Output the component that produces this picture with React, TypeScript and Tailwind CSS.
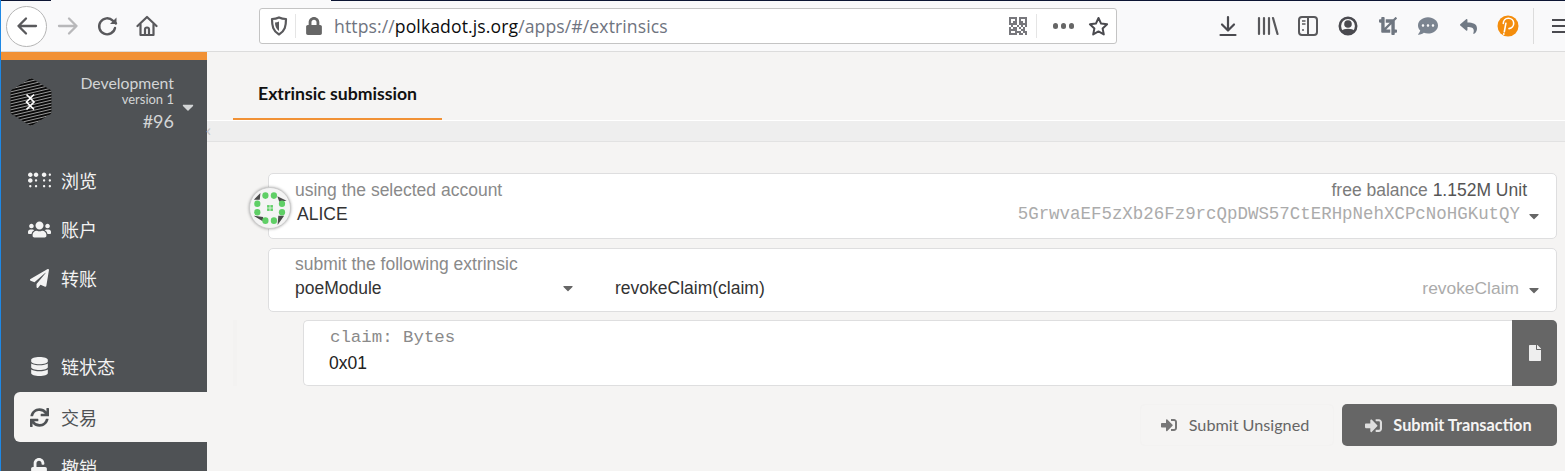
import React from "react";
import { FaBraille, FaUsers, FaPaperPlane, FaDatabase, FaSync, FaUnlock, FaFile, FaSignInAlt, FaCaretDown, FaLock, FaCommentDots, FaReply, FaCrop } from "react-icons/fa";

const sans = "font-['Liberation_Sans',Arial,sans-serif]";
const cjk = "font-['Noto_Sans_CJK_SC','Noto_Sans',sans-serif]";
const lato = "font-['Lato',sans-serif]";
const mono = "font-['Liberation_Mono',monospace]";

function Back() {
  return (
    <svg width="24" height="24" viewBox="0 0 24 24" fill="none" stroke="#59595c" strokeWidth="2.3" strokeLinecap="round" strokeLinejoin="round">
      <path d="M21 12H3.500M11 4.500 3.500 12l7.500 7.500" />
    </svg>
  );
}
function Forward() {
  return (
    <svg width="24" height="24" viewBox="0 0 24 24" fill="none" stroke="#b8b8ba" strokeWidth="2.3" strokeLinecap="round" strokeLinejoin="round">
      <path d="M3 12h17.500M13 4.500l7.500 7.500-7.500 7.500" />
    </svg>
  );
}
function Reload() {
  return (
    <svg width="22" height="22" viewBox="0 0 22 22" fill="none" stroke="#59595c" strokeWidth="2.4" strokeLinecap="round" strokeLinejoin="round">
      <path d="M18 13a8 8 0 1 1-2.200-7.400L19 8.500" />
      <path d="M19.500 2.500v6.500H13" fill="#59595c" stroke="none" />
    </svg>
  );
}
function Home() {
  return (
    <svg width="22" height="22" viewBox="0 0 22 22" fill="none" stroke="#59595c" strokeWidth="2.200" strokeLinejoin="round" strokeLinecap="round">
      <path d="M1.500 11 11 2l9.500 9" />
      <path d="M4.500 9.500V20h13V9.500" />
      <path d="M9 20v-5.500a2 2 0 0 1 4 0V20" />
    </svg>
  );
}
function Shield() {
  return (
    <svg width="18" height="20" viewBox="0 0 18 20" fill="none">
      <path d="M2 3c3 0 5-.6 7-1.600C11 2.400 13 3 16 3c0 7-1 12-7 15.500C3 15 2 10 2 3Z" stroke="#59595c" strokeWidth="2.200" strokeLinejoin="round" />
      <path d="M9 5.500v9.500c-3-2-4-5-4-8.500 1.500 0 2.800-.3 4-1Z" fill="#59595c" />
    </svg>
  );
}
function Qr() {
  const on = [
    "111101111","100101001","101101101","111101111","010010101","101101010","111100110","100111011","111101101",
  ];
  return (
    <svg width="18" height="18" viewBox="0 0 9 9" shapeRendering="crispEdges">
      {on.flatMap((row, y) =>
        row.split("").map((c, x) => (c === "1" ? <rect key={`${x}-${y}`} x={x} y={y} width="1" height="1" fill="#77777c" /> : null))
      )}
    </svg>
  );
}
function Library() {
  return (
    <svg width="22" height="20" viewBox="0 0 22 20" fill="none" stroke="#59595c" strokeWidth="2.200" strokeLinecap="round">
      <path d="M2 2v16M7 2v16M12 2v16M16 2l4.500 16" />
    </svg>
  );
}
function SidePanel() {
  return (
    <svg width="20" height="20" viewBox="0 0 20 20" fill="none">
      <rect x="1" y="1" width="18" height="18" rx="3" stroke="#59595c" strokeWidth="2" />
      <path d="M10 1v18" stroke="#59595c" strokeWidth="2" />
      <path d="M4 5h3.500M4 8h3.500M4 14h2" stroke="#59595c" strokeWidth="1.500" />
    </svg>
  );
}
function Account() {
  return (
    <svg width="20" height="20" viewBox="0 0 20 20">
      <circle cx="10" cy="10" r="8.200" fill="none" stroke="#4a4a4f" strokeWidth="2.600" />
      <circle cx="10" cy="8" r="3.800" fill="#4a4a4f" />
      <path d="M3.500 15c2-3 11-3 13 0-2 3-11 3-13 0Z" fill="#4a4a4f" />
    </svg>
  );
}
function Polka() {
  return (
    <svg width="22" height="22" viewBox="0 0 22 22">
      <circle cx="11" cy="11" r="10.500" fill="#f48d0c" />
      <path d="M6.300 8.500a5.200 5.200 0 1 1 5.700 5.100" fill="none" stroke="#fff" strokeWidth="1.600" strokeLinecap="round" />
      <path d="M8.900 8.200 7.300 16.800" fill="none" stroke="#fff" strokeWidth="1.600" strokeLinecap="round" />
      <circle cx="6.800" cy="19" r="0.900" fill="#fff" />
    </svg>
  );
}
function Logo() {
  const lines: number[] = [];
  for (let i = 0; i < 19; i++) lines.push(i * 3);
  return (
    <svg width="42" height="48" viewBox="0 0 42 48">
      <defs>
        <clipPath id="hex">
          <path d="M21 0 39 11c2 1 2.500 2 2.500 4v18c0 2-.5 3-2.500 4L21 48 3 37c-2-1-2.500-2-2.500-4V15c0-2 .5-3 2.500-4Z" />
        </clipPath>
      </defs>
      <g clipPath="url(#hex)">
        <rect width="42" height="48" fill="#0b0b0b" />
        {lines.map((y) => (
          <path key={y} d={`M0 ${y + 5}L42 ${y - 5}`} stroke="#bdbdbd" strokeWidth="0.800" />
        ))}
        <path d="M16.500 16.500 24 24 16.500 31.500M24 16.500 16.500 24 24 31.500" fill="none" stroke="#fff" strokeWidth="1.700" />
      </g>
    </svg>
  );
}
function Identicon() {
  const dots: [number, number][] = [
    [15.800, 7.800], [24.500, 7.800], [7.500, 16.200], [32.800, 16.200], [7.500, 24.800], [32.800, 24.800], [15.800, 33.500], [24.500, 33.500],
  ];
  return (
    <svg width="42" height="42" viewBox="0 0 41 41" className="absolute left-[-20px] top-[13px] rounded-full bg-[#f4f4f4] shadow-[0_0_3px_rgba(0,0,0,0.35)] border border-[#ccc]">
      <path d="M10.700 5 4 12 10 12ZM28 8.500 37.500 13 30 14.200ZM3.800 28.500 13.500 29.800 13 34.200ZM28.300 38 35 28.500 29 28.500Z" fill="#4a4a4a" />
      {dots.map(([x, y]) => (
        <ellipse key={`${x}-${y}`} cx={x} cy={y} rx="3.200" ry="3.400" fill="#5fcf66" />
      ))}
      <rect x="17.500" y="17.500" width="6" height="6" fill="#5fcf66" />
      <path d="M20.500 17.500v6M17.500 20.500h6" stroke="#f4f4f4" strokeWidth="0.800" />
    </svg>
  );
}

function NavItem({ icon, label, active, mt }: { icon: React.ReactNode; label: string; active?: boolean; mt?: string }) {
  return (
    <div
      className={`ml-[13px] h-[50px] flex items-center shrink-0 ${mt ?? ""} ${
        active ? "bg-[#f5f4f3] rounded-l-[6px] text-[#4f5255]" : "text-[#f3f3f3]"
      }`}
    >
      <span className="w-[24px] ml-[13px] flex justify-center">{icon}</span>
      <span className={`ml-[10px] text-[18px] ${cjk}`}>{label}</span>
    </div>
  );
}

export default function App() {
  return (
    <div className="w-[1565px] h-[471px] overflow-hidden flex flex-col border-l border-[#1e88e5] bg-[#f5f4f3]">
      <div className="h-px flex shrink-0 bg-[#f9f9fa]">
        <div className="w-[50px] bg-[#0c1533]" />
        <div className="w-[280px]" />
        <div className="flex-1 bg-[#0c1533]" />
      </div>
      {/* browser toolbar */}
      <header className="h-[51px] shrink-0 flex items-center bg-[#f9f9fa] border-b border-[#dcdcdc] overflow-hidden">
        <div className="ml-[5px] w-[41px] h-[41px] shrink-0 rounded-full border border-[#b5b5b5] bg-white flex items-center justify-center">
          <Back />
        </div>
        <div className="ml-[9px] w-[24px] shrink-0 flex justify-center"><Forward /></div>
        <div className="ml-[15px] w-[26px] shrink-0 flex justify-center"><Reload /></div>
        <div className="ml-[13px] w-[26px] shrink-0 flex justify-center"><Home /></div>
        <div className="ml-[99px] w-[858px] shrink-0 h-[36px] bg-white rounded-[3px] border border-[#c4c4c4] flex items-center">
          <div className="ml-[10px]"><Shield /></div>
          <div className="ml-[7px] w-px h-[24px] bg-[#e5e5e5]" />
          <FaLock className="ml-[9px] text-[#666]" size={18} />
          <div className="ml-[11px] text-[17.600px] font-['Open_Sans',sans-serif] text-[#6f7480] tracking-[0.1px] whitespace-nowrap">
            https://<span className="text-[#0c0c0d]">polkadot.js.org</span>/apps/#/extrinsics
          </div>
          <div className="ml-auto mr-[9px]"><Qr /></div>
          <div className="w-px h-[24px] bg-[#e5e5e5] mr-[16px]" />
          <div className="flex gap-[2.500px] mr-[14px]">
            <span className="w-[5.500px] h-[5.500px] rounded-full bg-[#666]" />
            <span className="w-[5.500px] h-[5.500px] rounded-full bg-[#666]" />
            <span className="w-[5.500px] h-[5.500px] rounded-full bg-[#666]" />
          </div>
          <svg width="21" height="20" viewBox="0 0 21 20" className="mr-[7px]" fill="none" stroke="#4a4a4f" strokeWidth="2" strokeLinejoin="round">
            <path d="m10.500 2 2.600 5.600 6 .7-4.500 4.100 1.200 6-5.300-3-5.300 3 1.200-6L1.900 8.300l6-.7Z" />
          </svg>
        </div>
        <div className="ml-[91px] flex items-center shrink-0">
          <div className="w-10 flex justify-center">
            <svg width="18" height="22" viewBox="0 0 18 22" fill="none" stroke="#4a4a4f" strokeWidth="2.200" strokeLinecap="round" strokeLinejoin="round">
              <path d="M9 2v13M3 9.500 9 15.500l6-6M1.500 20h15" />
            </svg>
          </div>
          <div className="w-10 flex justify-center"><Library /></div>
          <div className="w-10 flex justify-center"><SidePanel /></div>
          <div className="w-10 flex justify-center"><Account /></div>
          <div className="w-10 flex justify-center"><FaCrop size={18} className="text-[#6f7680]" /></div>
          <div className="w-10 flex justify-center"><FaCommentDots size={20} className="text-[#7b8490]" /></div>
          <div className="w-10 flex justify-center"><FaReply size={17} className="text-[#717a85]" /></div>
          <div className="w-10 flex justify-center"><Polka /></div>
        </div>
        <div className="ml-[5px] w-px h-[36px] shrink-0 bg-[#dcdcdc]" />
        <div className="ml-[18px] w-[24px] flex flex-col gap-[4px] shrink-0">
          <span className="h-[2px] bg-[#4a4a4f]" />
          <span className="h-[2px] bg-[#4a4a4f]" />
          <span className="h-[2px] bg-[#4a4a4f]" />
        </div>
      </header>

      <div className="flex-1 min-h-0 flex">
        {/* sidebar */}
        <aside className="w-[206px] shrink-0 bg-[#4f5255] border-t-[8px] border-[#f19135] flex flex-col overflow-hidden">
          <div className="h-[95px] shrink-0 flex relative">
            <div className="ml-[9px] mt-[18px] shrink-0"><Logo /></div>
            <div className={`ml-auto mr-[33px] mt-[14px] text-right text-[#d3d5d6] ${lato}`}>
              <div className="text-[15.800px] leading-[18px]">Development</div>
              <div className="text-[13px] leading-[15px]">version 1</div>
              <div className="text-[18px] leading-[26px] mt-[1px]">#96</div>
            </div>
            <FaCaretDown className="absolute left-[178px] top-[38px] text-[#d3d5d6]" size={18} />
          </div>
          <div className="flex flex-col">
            <NavItem icon={<FaBraille size={23} />} label="浏览" />
            <NavItem icon={<FaUsers size={23} />} label="账户" mt="-mt-[1px]" />
            <NavItem icon={<FaPaperPlane size={19} />} label="转账" mt="-mt-[1px]" />
            <NavItem icon={<FaDatabase size={19} />} label="链状态" mt="mt-[38px]" />
            <NavItem icon={<FaSync size={19} />} label="交易" active mt="mt-[1px]" />
            <NavItem icon={<FaUnlock size={18} />} label="撤销" />
          </div>
        </aside>

        {/* content */}
        <main className="flex-1 min-w-0 flex flex-col">
          <div className="h-[69px] shrink-0 flex border-b border-white">
            <div className={`ml-[26px] w-[209px] h-[68px] border-b-2 border-[#f19135] flex items-center pt-[18px] pl-[25px] text-[17.650px] font-bold text-[#111] ${lato}`}>
              Extrinsic submission
            </div>
          </div>
          <div className="h-[21px] shrink-0 bg-[#eeeeee] border-b border-[#e2e2e2] flex items-center">
            <span className="text-[#c4c4c4] text-[16px] leading-none -mt-[2px] -ml-[1px]">‹</span>
          </div>

          <div className="pl-[61px] pr-[8px] pt-[31px] flex flex-col">
            <div className={`relative h-[66px] bg-white rounded-[5px] border border-[#dededf] pl-[26px] pr-[14px] ${sans}`}>
              <Identicon />
              <div className="flex justify-between h-[28px] items-end">
                <span className="text-[17.500px] leading-[24px] text-[#8a8a8a]">using the selected account</span>
                <span className="text-[17.500px] leading-[24px] text-[#7b7b7b] mr-[15px]">
                  free balance <span className="text-[#555]">1.152M Unit</span>
                </span>
              </div>
              <div className="flex justify-between items-center h-[23px] mt-[1px]">
                <span className="ml-[2px] text-[17.500px] text-[#333]">ALICE</span>
                <span className="flex items-center">
                  <span className={`text-[17.450px] text-[#ababab] ${mono}`}>5GrwvaEF5zXb26Fz9rcQpDWS57CtERHpNehXCPcNoHGKutQY</span>
                  <FaCaretDown className="ml-[6px] mt-[3px] text-[#666]" size={16} />
                </span>
              </div>
            </div>

            <div className={`mt-[9px] h-[64px] bg-white rounded-[5px] border border-[#dededf] pl-[26px] pr-[14px] ${sans}`}>
              <div className="text-[17.500px] leading-[24px] pt-[3px] h-[27px] text-[#8a8a8a]">submit the following extrinsic</div>
              <div className="flex items-center h-[24px]">
                <span className="w-[265px] text-[17.500px] text-[#333]">poeModule</span>
                <FaCaretDown className="text-[#666]" size={16} />
                <span className="ml-[39px] text-[17.500px] text-[#333]">revokeClaim(claim)</span>
                <span className="ml-auto text-[17.400px] text-[#ababab]">revokeClaim</span>
                <FaCaretDown className="ml-[7px] mt-[3px] text-[#666]" size={16} />
              </div>
            </div>

            <div className="mt-[8px] -ml-[35px] pl-[66px] flex h-[66px] border-l-[4px] border-[#f3f2f1]">
              <div className={`flex-1 bg-white rounded-l-[5px] border border-r-0 border-[#dededf] pl-[25px]`}>
                <div className={`h-[29px] flex items-end pl-[1px] text-[17.400px] leading-[24px] text-[#8a8a8a] ${mono}`}>claim: Bytes</div>
                <div className={`h-[24px] mt-[1px] text-[17.500px] leading-[24px] text-[#222] ${sans}`}>0x01</div>
              </div>
              <div className="w-[45px] bg-[#666] rounded-r-[5px] flex items-center justify-center">
                <FaFile className="text-[#eee]" size={16} />
              </div>
            </div>

            <div className={`mt-[18px] flex justify-end ${lato}`}>
              <div className="w-[194px] h-[42px] mr-[8px] pr-[4px] flex items-center justify-center rounded-[5px] border border-[#f3f2f1] text-[#666] text-[16.200px]">
                <FaSignInAlt size={16} className="mr-[12px] text-[#777]" />
                Submit Unsigned
              </div>
              <div className="w-[215px] h-[42px] pr-[2px] flex items-center justify-center rounded-[5px] bg-[#666] text-[#f5f4f3] text-[16.300px] font-bold">
                <FaSignInAlt size={17} className="mr-[11px] text-[#dedede]" />
                Submit Transaction
              </div>
            </div>
          </div>
        </main>
      </div>
    </div>
  );
}
